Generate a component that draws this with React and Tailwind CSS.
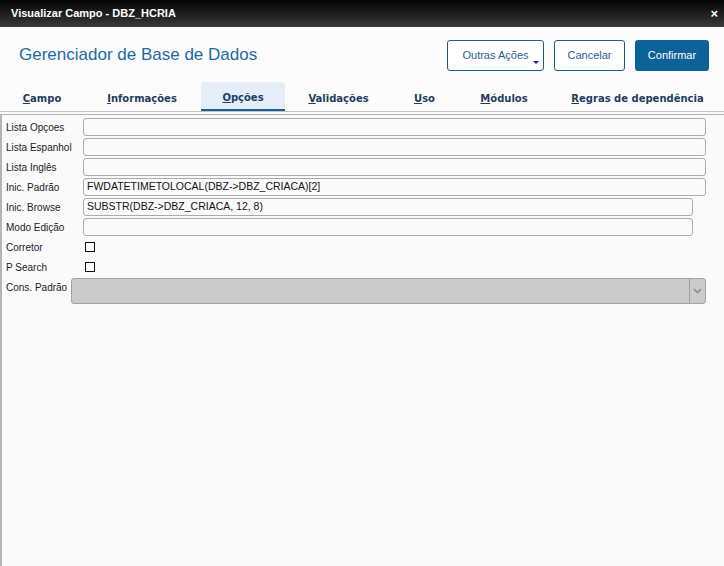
import React from 'react'

const tabs = [
  { first: 'C', rest: 'ampo', w: 'w-[82px]' },
  { first: 'I', rest: 'nformações', w: 'w-[114px]' },
  { first: 'O', rest: 'pções', w: 'w-[84px]', active: true },
  { first: 'V', rest: 'alidações', w: 'w-[103px]' },
  { first: 'U', rest: 'so', w: 'w-[65px]' },
  { first: 'M', rest: 'ódulos', w: 'w-[90px]' },
  { first: 'R', rest: 'egras de dependência', w: 'w-[173px]' },
]

const fields = [
  { label: 'Lista Opçoes', value: '', short: false },
  { label: 'Lista Espanhol', value: '', short: false },
  { label: 'Lista Inglês', value: '', short: false },
  { label: 'Inic. Padrão', value: 'FWDATETIMETOLOCAL(DBZ->DBZ_CRIACA)[2]', short: false },
  { label: 'Inic. Browse', value: 'SUBSTR(DBZ->DBZ_CRIACA, 12, 8)', short: true },
  { label: 'Modo Edição', value: '', short: true },
]

function Field({ label, value, short }) {
  return (
    <div className="flex items-center h-[20px]">
      <span className="w-[81px] pl-[4px] text-[10px] text-[#1a1a1a] shrink-0">{label}</span>
      <div
        className={
          'h-[18px] flex-1 flex items-center px-[3px] border border-[#ababab] rounded-[3px] bg-[#fafafa] text-[10.5px] text-[#111] ' +
          (short ? 'mr-[31px]' : 'mr-[18px]')
        }
      >
        {value}
      </div>
    </div>
  )
}

function Check({ label }) {
  return (
    <div className="flex items-center h-[20px]">
      <span className="w-[83px] pl-[4px] text-[10px] text-[#1a1a1a] shrink-0">{label}</span>
      <span className="w-[10px] h-[10px] border border-[#111] bg-white" />
    </div>
  )
}

export default function App() {
  return (
    <div className="w-[724px] h-[566px] bg-[#fafafa] flex flex-col font-['Liberation_Sans',Arial,sans-serif] overflow-hidden">
      <div className="h-[27px] shrink-0 flex items-center justify-between pl-[11px] pr-[6px] bg-gradient-to-b from-[#050505] to-[#3b3b3b]">
        <span className="text-white text-[11px] font-bold">Visualizar Campo - DBZ_HCRIA</span>
        <span className="text-white text-[13px] font-bold leading-none">×</span>
      </div>

      <div className="h-[55px] shrink-0 flex items-center justify-between pl-[19px] pr-[15px] bg-[#fcfcfc]">
        <h1 className="text-[17px] text-[#1d6aa3]">Gerenciador de Base de Dados</h1>
        <div className="flex items-center gap-[10px] mt-[1px]">
          <button className="relative w-[97px] h-[31px] rounded-[3px] border border-[#1b5d8e] text-[11px] text-[#1f5f92] bg-white">
            Outras Ações
            <span className="absolute right-[4px] bottom-[6px] w-0 h-0 border-l-[3px] border-r-[3px] border-t-[3px] border-l-transparent border-r-transparent border-t-[#16238a]" />
          </button>
          <button className="w-[71px] h-[31px] rounded-[3px] border border-[#1b5d8e] text-[11px] text-[#1f5f92] bg-white">
            Cancelar
          </button>
          <button className="w-[74px] h-[31px] rounded-[3px] bg-[#0c6299] text-[11px] text-white">
            Confirmar
          </button>
        </div>
      </div>

      <div className="h-[30px] shrink-0 flex items-stretch gap-[2px] pl-[1px] border-b border-[#c2c2c2] bg-[#fcfcfc] font-['DejaVu_Sans',Verdana,sans-serif]">
        {tabs.map((t) => (
          <div
            key={t.first + t.rest}
            className={
              t.w +
              ' shrink-0 flex items-center justify-center pt-[4px] text-[10px] font-bold text-[#1f3d5e] ' +
              (t.active ? 'bg-[#e3eef9] rounded-t-[3px] border-b-2 border-[#1a5e93]' : '')
            }
          >
            <span>
              <span className="underline">{t.first}</span>
              {t.rest}
            </span>
          </div>
        ))}
      </div>

      <div className="flex-1 mt-[2px] border-t border-l-2 border-[#b4b4b4] bg-[#fafafa] pt-[2px]">
        {fields.map((f) => (
          <Field key={f.label} {...f} />
        ))}
        <Check label="Corretor" />
        <Check label="P Search" />
        <div className="flex items-start mt-[1px]">
          <span className="w-[69px] pl-[4px] pt-[2px] text-[10px] text-[#1a1a1a] shrink-0">Cons. Padrão</span>
          <div className="flex-1 mr-[18px] h-[26px] flex border border-[#a3a3a3] rounded-[3px] bg-[#cbcbcb]">
            <div className="flex-1" />
            <div className="w-[16px] border-l border-[#a0a0a0] flex items-center justify-center">
              <svg width="9" height="6" viewBox="0 0 9 6">
                <path d="M1 1 L4.5 4.5 L8 1" fill="none" stroke="#8a8a8a" strokeWidth="1.6" />
              </svg>
            </div>
          </div>
        </div>
      </div>
    </div>
  )
}
